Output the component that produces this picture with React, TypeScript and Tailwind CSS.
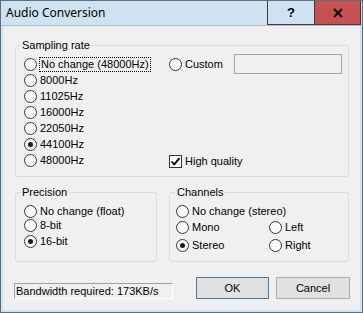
import React from "react";

function Radio({ checked }: { checked?: boolean }) {
  return (
    <span className="w-[13px] h-[13px] rounded-full border border-[#333333] bg-white flex items-center justify-center shrink-0">
      {checked && <span className="w-[5px] h-[5px] rounded-full bg-[#1a1a1a]" />}
    </span>
  );
}

function RadioRow({
  label,
  checked,
  h,
  focus,
}: {
  label: string;
  checked?: boolean;
  h: string;
  focus?: boolean;
}) {
  return (
    <div className={`flex items-center gap-[3px] ${h}`}>
      <Radio checked={checked} />
      {focus ? (
        <span className="border border-dotted border-black px-[1px] -ml-[1px] leading-[13px]">{label}</span>
      ) : (
        <span className="leading-[13px]">{label}</span>
      )}
    </div>
  );
}

export default function App() {
  return (
    <div
      className="w-[363px] h-[313px] bg-[#cfe2ef] border border-[#5d6f80] flex flex-col text-[11px] text-black"
      style={{ fontFamily: '"Liberation Sans", Arial, sans-serif' }}
    >
      {/* Title bar */}
      <div className="h-[24px] flex items-stretch pr-[1px]">
        <div
          className="flex-1 flex items-center pl-[5px] text-[12px]"
          style={{ fontFamily: '"Noto Sans", "Open Sans", sans-serif' }}
        >
          Audio Conversion
        </div>
        <div className="w-[47px] border border-r-0 border-t-0 border-[#3c3c3c] bg-[#cfe2ef] flex items-center justify-center font-bold text-[13px]">
          ?
        </div>
        <div className="w-[47px] border border-t-0 border-[#3c3c3c] bg-[#c75050] flex items-center justify-center">
          <svg width="10" height="10" viewBox="0 0 10 10">
            <path d="M1 1 L9 9 M9 1 L1 9" stroke="#000" strokeWidth="2" />
          </svg>
        </div>
      </div>
      <div className="h-px bg-[#a9bccb]" />
      {/* Body */}
      <div className="flex-1 mx-[2px] mb-[2px] bg-[#f0f0f0] pt-[13px] pl-[11px] flex flex-col">
        <fieldset className="ml-px w-[334px] h-[138px] border border-[#dcdcdc] rounded-[3px]">
          <legend className="ml-[4px] px-[2px] leading-[13px]">Sampling rate</legend>
          <div className="mt-[4px] pl-[8px] grid grid-cols-[145px_1fr]">
            <div className="flex flex-col">
              <RadioRow label="No change (48000Hz)" h="h-[16px]" focus />
              <RadioRow label="8000Hz" h="h-[16px]" />
              <RadioRow label="11025Hz" h="h-[16px]" />
              <RadioRow label="16000Hz" h="h-[16px]" />
              <RadioRow label="22050Hz" h="h-[16px]" />
              <RadioRow label="44100Hz" h="h-[16px]" checked />
              <RadioRow label="48000Hz" h="h-[17px]" />
            </div>
            <div className="flex flex-col justify-between">
              <div className="flex items-center h-[16px]">
                <Radio />
                <span className="ml-[3px] w-[49px] leading-[13px]">Custom</span>
                <span className="w-[108px] h-[20px] border border-[#a5a5a5] bg-[#f0f0f0]" />
              </div>
              <div className="flex items-center gap-[3px] h-[16px]">
                <span className="w-[13px] h-[13px] border border-[#333333] bg-white flex items-center justify-center shrink-0">
                  <svg width="11" height="11" viewBox="0 0 11 11">
                    <path d="M1.5 5.5 L4.2 8.3 L9.5 2.2" stroke="#000" strokeWidth="1.8" fill="none" />
                  </svg>
                </span>
                <span className="leading-[13px]">High quality</span>
              </div>
            </div>
          </div>
        </fieldset>

        <div className="ml-px mt-[9px] flex gap-[12px]">
          <fieldset className="w-[142px] h-[76px] border border-[#dcdcdc] rounded-[3px]">
            <legend className="ml-[4px] px-[2px] leading-[13px]">Precision</legend>
            <div className="mt-[5px] pl-[8px] flex flex-col">
              <RadioRow label="No change (float)" h="h-[14px]" />
              <RadioRow label="8-bit" h="h-[14px]" />
              <RadioRow label="16-bit" h="h-[18px]" checked />
            </div>
          </fieldset>
          <fieldset className="w-[180px] h-[76px] border border-[#dcdcdc] rounded-[3px]">
            <legend className="ml-[5px] px-[2px] leading-[13px]">Channels</legend>
            <div className="mt-[5px] pl-[6px] flex flex-col">
              <RadioRow label="No change (stereo)" h="h-[14px]" />
              <div className="grid grid-cols-[93px_1fr]">
                <RadioRow label="Mono" h="h-[18px]" />
                <RadioRow label="Left" h="h-[18px]" />
                <RadioRow label="Stereo" h="h-[18px]" checked />
                <RadioRow label="Right" h="h-[18px]" />
              </div>
            </div>
          </fieldset>
        </div>

        <div className="mt-[15px] flex items-end">
          <div className="w-[159px] h-[16px] border-t border-l border-t-[#a0a0a0] border-l-[#a0a0a0] border-r border-b border-r-white border-b-white pl-px leading-[14px] whitespace-nowrap">
            Bandwidth required: 173KB/s
          </div>
          <button className="ml-[23px] w-[73px] h-[22px] border border-[#3c7fb1] bg-[#e1e1e1] flex items-center justify-center leading-none">
            OK
          </button>
          <button className="ml-[7px] w-[74px] h-[22px] border border-[#adadad] bg-[#e1e1e1] flex items-center justify-center leading-none">
            Cancel
          </button>
        </div>
      </div>
    </div>
  );
}
